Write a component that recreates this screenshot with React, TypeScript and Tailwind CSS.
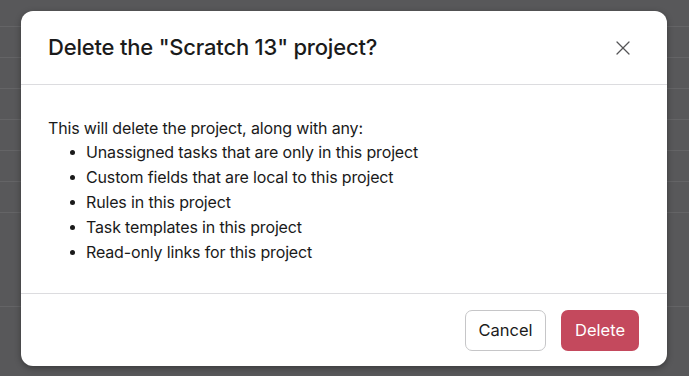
import { X } from "lucide-react"

const rows = [27, 31, 31, 31, 31, 31, 31, 94]

const items = [
  "Unassigned tasks that are only in this project",
  "Custom fields that are local to this project",
  "Rules in this project",
  "Task templates in this project",
  "Read-only links for this project",
]

export default function App() {
  return (
    <div className="relative h-[376px] w-full overflow-hidden bg-[#58585a] font-['Inter','Liberation_Sans',sans-serif]">
      {/* Dimmed page behind the dialog */}
      <div className="flex flex-col">
        {rows.map((h, i) => (
          <div key={i} className="border-b border-[#646466]" style={{ height: h }} />
        ))}
      </div>

      {/* ── Dialog ── */}
      <div className="absolute left-[21px] top-[11px] flex h-[355px] w-[646px] flex-col rounded-[12px] bg-white shadow-[0_2px_6px_rgba(0,0,0,0.35)]">
        {/* Header */}
        <div className="flex h-[74px] items-center justify-between border-b border-[#dcdcdf] pl-[27px] pr-[32px]">
          <h2 className="text-[22px] font-medium tracking-[-0.2px] text-[#1b1b1b]">
            Delete the "Scratch 13" project?
          </h2>
          <X className="h-[24px] w-[24px] text-[#555557]" strokeWidth={1.25} />
        </div>

        {/* Body */}
        <div className="flex-1 pl-[27px] pt-[31px] text-[16px] leading-[25px] text-[#1a1a1a]">
          <p className="tracking-[-0.15px]">This will delete the project, along with any:</p>
          <ul className="mt-[-1px]">
            {items.map((t) => (
              <li key={t} className="flex items-center tracking-[-0.15px]">
                <span className="ml-[22px] mr-[11px] h-[5px] w-[5px] rounded-full bg-[#1a1a1a]" />
                {t}
              </li>
            ))}
          </ul>
        </div>

        {/* Footer */}
        <div className="flex h-[73px] items-center justify-end gap-[15px] border-t border-[#dcdcdf] pr-[28px]">
          <button className="h-[41px] w-[81px] rounded-[7px] border border-[#c6c6c8] bg-white text-[16.5px] text-[#1b1b1b]">
            Cancel
          </button>
          <button className="h-[41px] w-[78px] rounded-[7px] bg-[#c4495d] text-[16.5px] text-white">
            Delete
          </button>
        </div>
      </div>
    </div>
  )
}
